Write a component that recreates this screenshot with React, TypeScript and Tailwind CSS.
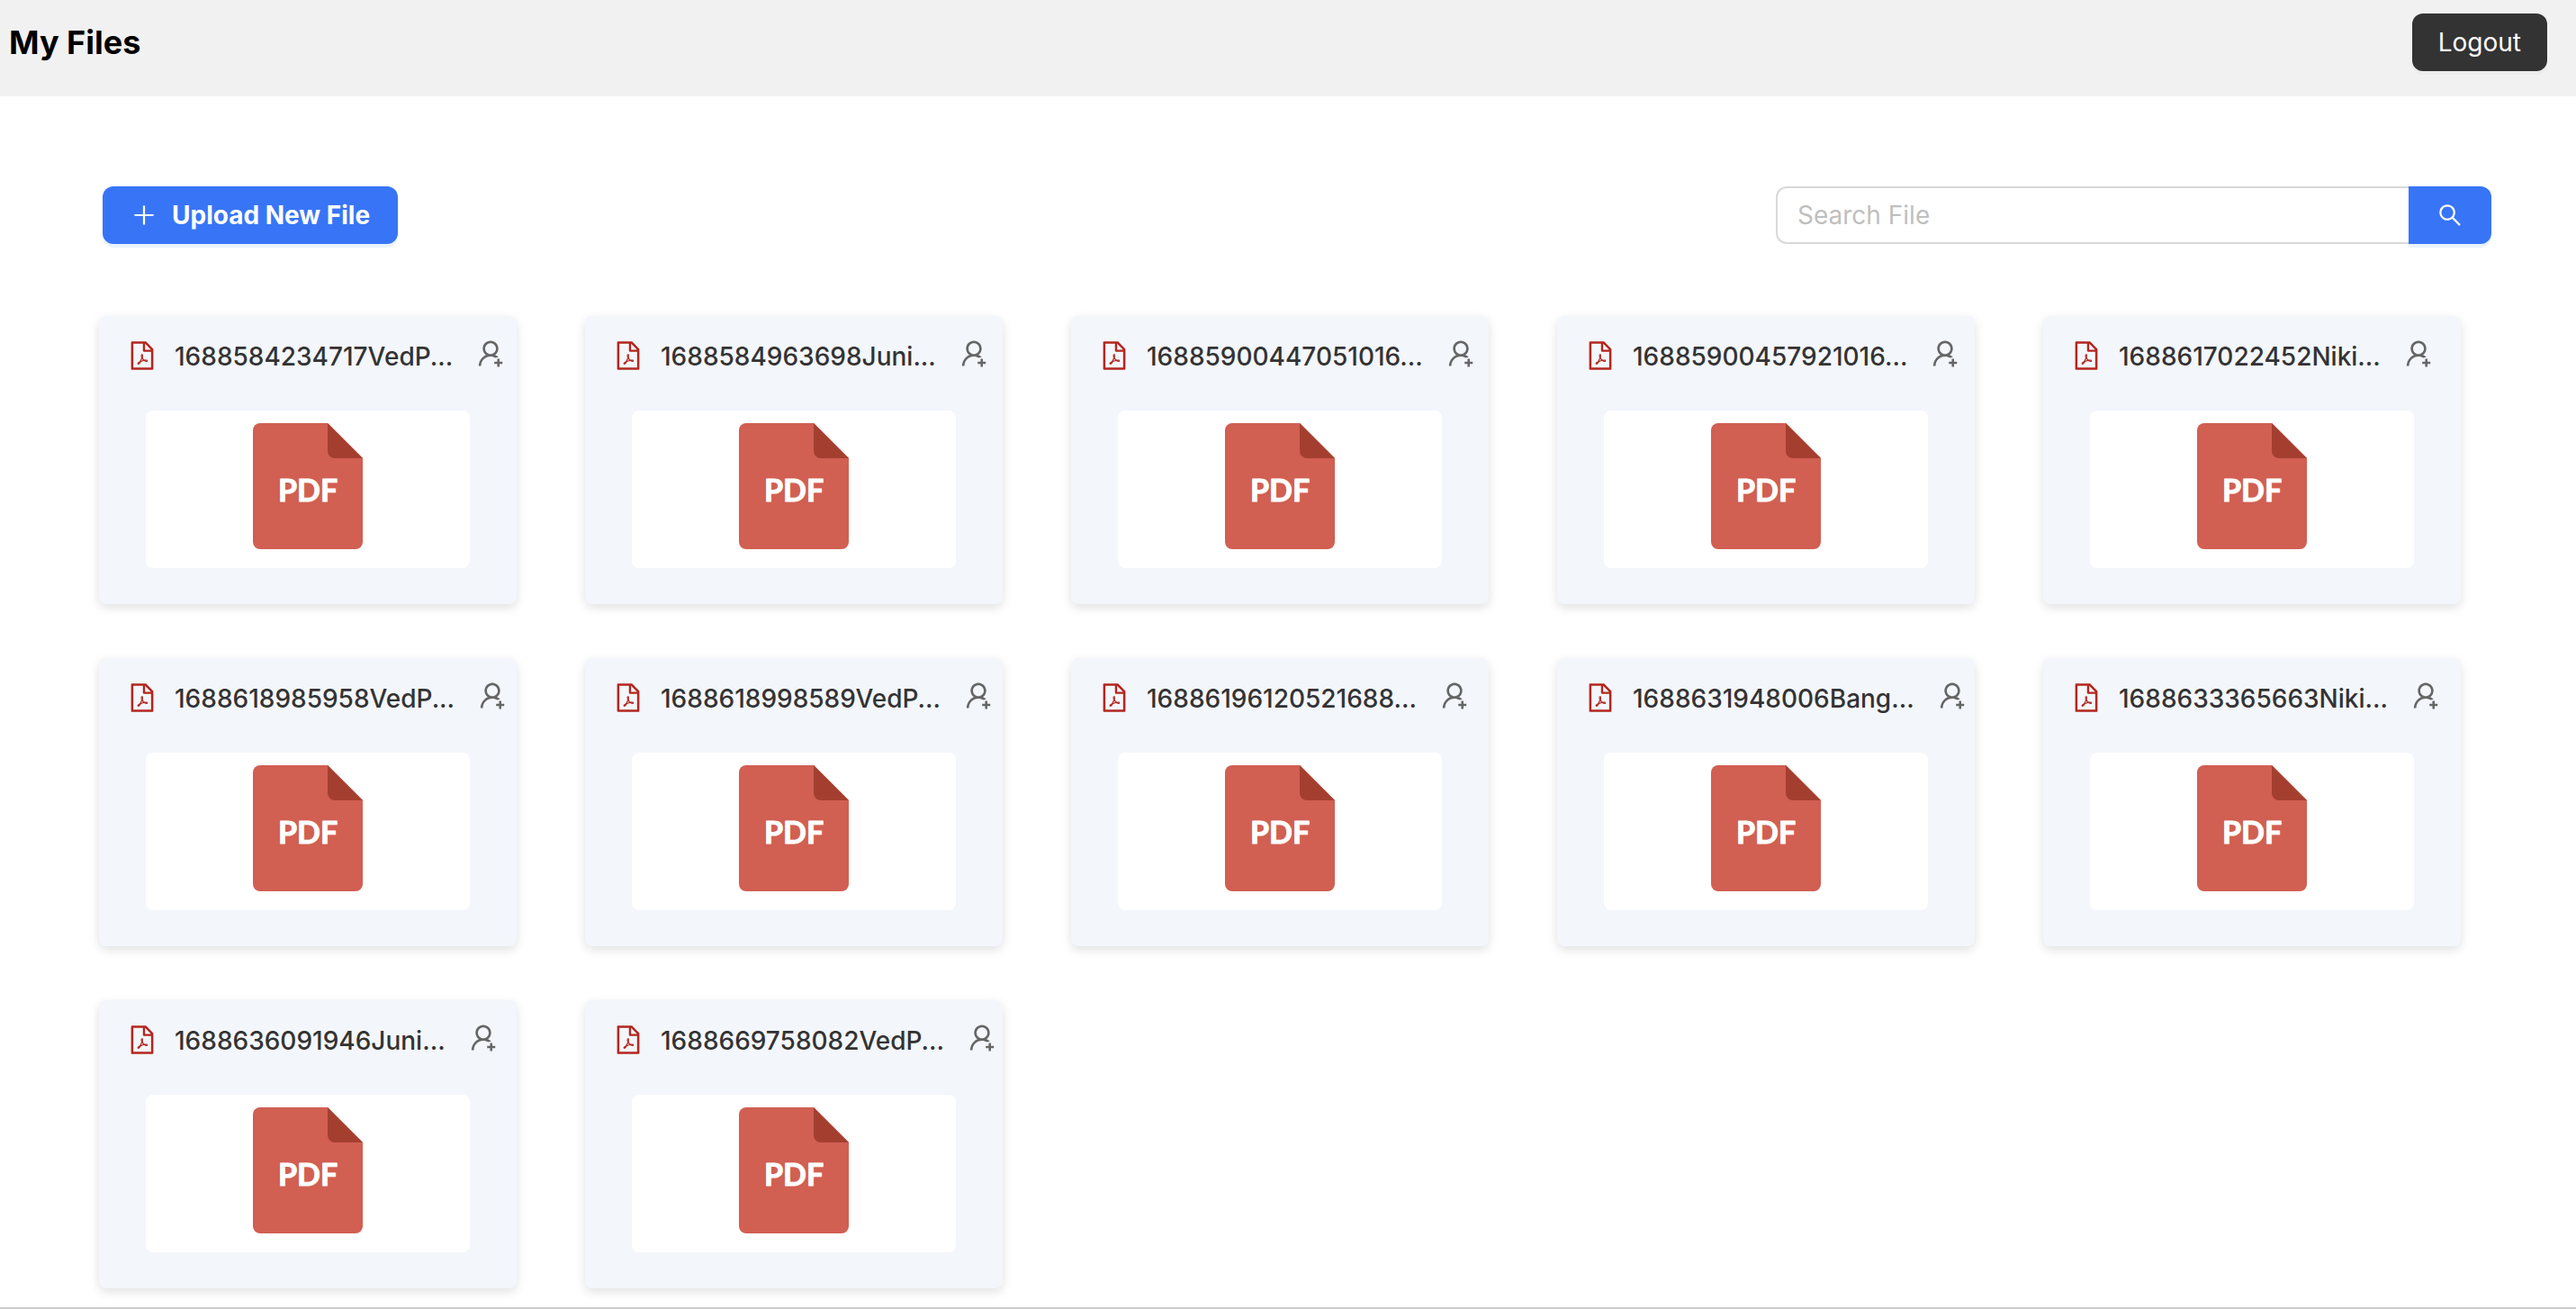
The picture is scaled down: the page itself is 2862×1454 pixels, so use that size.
import React from "react";
import {
  AiOutlineFilePdf,
  AiOutlinePlus,
  AiOutlineSearch,
  AiOutlineUserAdd,
} from "react-icons/ai";

const files = [
  "1688584234717VedP...",
  "1688584963698Juni...",
  "16885900447051016...",
  "16885900457921016...",
  "1688617022452Niki...",
  "1688618985958VedP...",
  "1688618998589VedP...",
  "16886196120521688...",
  "1688631948006Bang...",
  "1688633365663Niki...",
  "1688636091946Juni...",
  "1688669758082VedP...",
];

function PdfArtwork() {
  return (
    <svg className="h-[140px] w-[122px]" viewBox="0 0 122 140" role="img" aria-label="PDF document">
      <path
        d="M8 0H83L122 39V132a8 8 0 0 1-8 8H8a8 8 0 0 1-8-8V8a8 8 0 0 1 8-8Z"
        fill="#d15f52"
      />
      <path d="M83 0L122 39H91a8 8 0 0 1-8-8Z" fill="#a43f30" />
      <text
        x="28"
        y="87"
        fill="#ffffff"
        stroke="#ffffff"
        strokeWidth="1"
        strokeLinejoin="round"
        className="font-[Lato,sans-serif] text-[34px] font-bold"
      >
        PDF
      </text>
    </svg>
  );
}

function FileCard({ name }: { name: string }) {
  return (
    <li className="rounded-lg bg-[#f3f6fb] pt-6 pb-10 shadow-[0_4px_12px_rgba(0,0,0,0.12)]">
      <div className="flex items-start pl-[30px] whitespace-nowrap">
        <AiOutlineFilePdf className="mt-0.5 size-9 shrink-0 text-[#b3261e]" aria-hidden="true" />
        <h2 className="ml-[18px] text-[28px] leading-[42px] font-medium text-[#333333]">{name}</h2>
        <button type="button" aria-label={`Share ${name}`} className="ml-6 shrink-0 text-[#666666]">
          <AiOutlineUserAdd className="size-9" />
        </button>
      </div>
      <div className="mx-[52px] mt-[39px] flex h-[175px] justify-center rounded-lg bg-white pt-[14px]">
        <PdfArtwork />
      </div>
    </li>
  );
}

export default function App() {
  return (
    <div className="flex min-h-screen flex-col border-b-2 border-[#cccccc] bg-white font-[Inter,sans-serif]">
      <header className="flex items-start justify-between bg-[#f1f1f1] pt-[15px] pr-8 pb-7 pl-[10px]">
        <h1 className="text-[36px] leading-[64px] font-bold text-black">My Files</h1>
        <button
          type="button"
          className="h-16 rounded-xl bg-[#333333] px-[29px] text-[28px] text-white shadow-[0_4px_0_rgba(0,0,0,0.02)]"
        >
          Logout
        </button>
      </header>
      <main className="pt-[100px]">
        <div className="flex items-center justify-between pr-[94px] pl-[114px]">
          <button
            type="button"
            className="flex h-16 items-center gap-4 rounded-xl bg-[#3875f6] px-[31px] text-[28px] font-bold text-white shadow-[0_4px_0_#e9f3ff]"
          >
            <AiOutlinePlus className="size-[30px]" aria-hidden="true" />
            Upload New File
          </button>
          <form role="search" className="flex h-16" onSubmit={(e) => e.preventDefault()}>
            <input
              type="search"
              aria-label="Search File"
              placeholder="Search File"
              className="w-[703px] rounded-l-xl border-2 border-r-0 border-[#d9d9d9] bg-white px-[22px] text-[28px] outline-none placeholder:text-[#bfbfbf]"
            />
            <button
              type="submit"
              aria-label="Search"
              className="flex w-[92px] items-center justify-center rounded-r-xl bg-[#3875f6] text-white shadow-[0_4px_0_#e9f3ff]"
            >
              <AiOutlineSearch className="size-[30px]" />
            </button>
          </form>
        </div>
        <ul className="mt-20 grid grid-cols-5 gap-x-[76px] gap-y-[60px] pr-32 pl-[110px]">
          {files.map((name) => (
            <FileCard key={name} name={name} />
          ))}
        </ul>
      </main>
    </div>
  );
}
